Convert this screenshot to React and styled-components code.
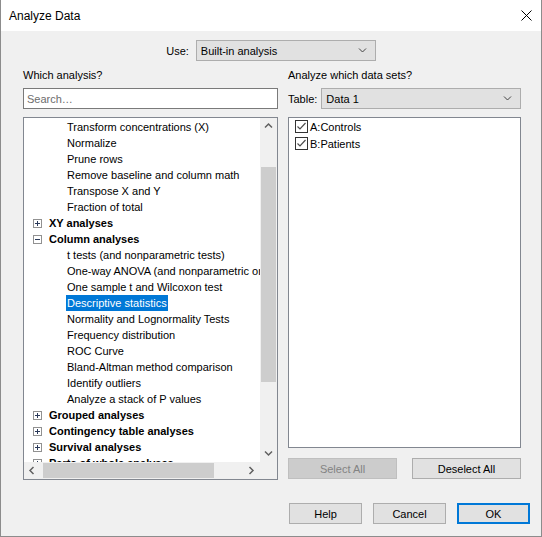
import styled, { createGlobalStyle } from 'styled-components'

const GlobalStyle = createGlobalStyle`
  body {
    margin: 0;
    font-family: "Liberation Sans", Arial, sans-serif;
    background: #ffffff;
  }
  * { box-sizing: border-box; }
`

const Window = styled.div`
  width: 542px;
  height: 537px;
  display: flex;
  flex-direction: column;
  background: #f0f0f0;
  border: 1px solid #8c8c8c;
  border-top: none;
  font-size: 11px;
  color: #000;
`

const TitleBar = styled.div`
  height: 31px;
  flex: none;
  background: #fff;
  display: flex;
  align-items: center;
  justify-content: space-between;
  padding: 0 9px 0 8px;
  font-size: 12px;
`

const Body = styled.div`
  flex: 1;
  display: flex;
  flex-direction: column;
`

const UseRow = styled.div`
  display: flex;
  justify-content: center;
  align-items: center;
  gap: 7px;
  margin-top: 9px;
`

const Select = styled.div`
  width: ${({ $width }) => ($width ? `${$width}px` : 'auto')};
  flex: ${({ $width }) => ($width ? 'none' : '1')};
  height: 21px;
  border: 1px solid #adadad;
  background: #e1e1e1;
  display: flex;
  align-items: center;
  justify-content: space-between;
  padding: 0 8px 0 4px;
`

const Main = styled.div`
  display: grid;
  grid-template-columns: 255px 233px;
  column-gap: 10px;
  padding: 0 20px 0 22px;
  margin-top: 7px;
`

const Column = styled.div`
  display: flex;
  flex-direction: column;
`

const SectionLabel = styled.div`
  height: 14px;
  line-height: 14px;
`

const Search = styled.input`
  margin-top: 6px;
  height: 21px;
  border: 1px solid #7a7a7a;
  background: #fff;
  padding: 0 3px;
  font: inherit;
  outline: none;

  &::placeholder {
    color: #6d6d6d;
  }
`

const TableRow = styled.div`
  margin-top: 6px;
  display: flex;
  align-items: center;
  gap: 4px;
`

const Tree = styled.div`
  margin-top: 8px;
  height: 363px;
  border: 1px solid #828790;
  background: #fff;
  display: grid;
  grid-template-columns: minmax(0, 1fr) 17px;
  grid-template-rows: minmax(0, 1fr) 17px;
  overflow: hidden;
`

const TreeContent = styled.div`
  overflow: hidden;
  padding-top: 1px;
`

const TreeRow = styled.div`
  height: 16px;
  display: flex;
  align-items: center;
  gap: 6px;
  padding-left: ${({ $group }) => ($group ? '9px' : '42px')};
  white-space: nowrap;
`

const RowLabel = styled.span`
  padding: 0 1px;
  line-height: 16px;
  font-weight: ${({ $bold }) => ($bold ? 700 : 400)};
  background: ${({ $selected }) => ($selected ? '#0078d7' : 'transparent')};
  color: ${({ $selected }) => ($selected ? '#fff' : '#000')};
`

const VScroll = styled.div`
  background: #f0f0f0;
  display: flex;
  flex-direction: column;
`

const HScroll = styled.div`
  background: #f0f0f0;
  display: flex;
  align-items: stretch;
`

const Corner = styled.div`
  background: #f0f0f0;
`

const Arrow = styled.div`
  width: 17px;
  height: 17px;
  flex: none;
  display: flex;
  align-items: center;
  justify-content: center;
`

const VThumb = styled.div`
  margin: 32px 1px 0;
  height: 215px;
  background: #cdcdcd;
`

const HThumb = styled.div`
  margin: 1px 0 1px 2px;
  width: 171px;
  background: #cdcdcd;
`

const Spacer = styled.div`
  flex: 1;
`

const DataList = styled.div`
  margin-top: 8px;
  height: 331px;
  border: 1px solid #828790;
  background: #fff;
  padding: 0 0 0 6px;
`

const CheckRow = styled.div`
  height: 17px;
  display: flex;
  align-items: center;
  gap: 2px;
`

const Box = styled.span`
  width: 13px;
  height: 13px;
  border: 1px solid #333;
  background: #fff;
  display: flex;
`

const ButtonPair = styled.div`
  margin-top: 10px;
  display: grid;
  grid-template-columns: 1fr 1fr;
  column-gap: 15px;
`

const Button = styled.button`
  height: 21px;
  width: ${({ $width }) => ($width ? `${$width}px` : 'auto')};
  padding: 0;
  font: inherit;
  color: ${({ disabled }) => (disabled ? '#838383' : '#000')};
  background: ${({ disabled }) => (disabled ? '#cccccc' : '#e1e1e1')};
  border: ${({ disabled, $primary }) =>
    $primary ? '2px solid #0078d7' : disabled ? '1px solid #bfbfbf' : '1px solid #adadad'};
`

const Footer = styled.div`
  margin-top: auto;
  display: flex;
  justify-content: flex-end;
  gap: 11px;
  padding: 0 11px 12px 0;
`

const Chevron = ({ dir = 'down', color = '#606060', width = 1.5 }) => {
  const paths = {
    up: 'M1 5.5 L4.5 2 L8 5.5',
    down: 'M1 2.5 L4.5 6 L8 2.5',
    left: 'M5.5 1 L2 4.5 L5.5 8',
    right: 'M2.5 1 L6 4.5 L2.5 8',
  }
  return (
    <svg width="9" height="9" viewBox="0 0 9 9">
      <path d={paths[dir]} fill="none" stroke={color} strokeWidth={width} />
    </svg>
  )
}

const Expander = ({ open }) => (
  <svg width="9" height="9" viewBox="0 0 9 9" shapeRendering="crispEdges">
    <rect x="0.5" y="0.5" width="8" height="8" fill="#fff" stroke="#919191" />
    <path d="M2 4.5 H7" stroke="#2b3a5a" />
    {!open && <path d="M4.5 2 V7" stroke="#2b3a5a" />}
  </svg>
)

const CheckBox = () => (
  <Box>
    <svg width="11" height="11" viewBox="0 0 11 11">
      <path d="M1.5 5.5 L4 8 L9.5 2" fill="none" stroke="#4d4d4d" strokeWidth="1.2" />
    </svg>
  </Box>
)

const treeRows = [
  { label: 'Transform concentrations (X)' },
  { label: 'Normalize' },
  { label: 'Prune rows' },
  { label: 'Remove baseline and column math' },
  { label: 'Transpose X and Y' },
  { label: 'Fraction of total' },
  { label: 'XY analyses', group: true },
  { label: 'Column analyses', group: true, open: true },
  { label: 't tests (and nonparametric tests)' },
  { label: 'One-way ANOVA (and nonparametric or mixed)' },
  { label: 'One sample t and Wilcoxon test' },
  { label: 'Descriptive statistics', selected: true },
  { label: 'Normality and Lognormality Tests' },
  { label: 'Frequency distribution' },
  { label: 'ROC Curve' },
  { label: 'Bland-Altman method comparison' },
  { label: 'Identify outliers' },
  { label: 'Analyze a stack of P values' },
  { label: 'Grouped analyses', group: true },
  { label: 'Contingency table analyses', group: true },
  { label: 'Survival analyses', group: true },
  { label: 'Parts of whole analyses', group: true },
]

const App = () => (
  <>
    <GlobalStyle />
    <Window>
      <TitleBar>
        <span>Analyze Data</span>
        <svg width="11" height="11" viewBox="0 0 11 11">
          <path d="M0.5 0.5 L10.5 10.5 M10.5 0.5 L0.5 10.5" stroke="#000" strokeWidth="1" />
        </svg>
      </TitleBar>

      <Body>
        <UseRow>
          <span>Use:</span>
          <Select $width={180}>
            <span>Built-in analysis</span>
            <Chevron dir="down" color="#444" width={1} />
          </Select>
        </UseRow>

        <Main>
          <Column>
            <SectionLabel>Which analysis?</SectionLabel>
            <Search placeholder="Search…" />
            <Tree>
              <TreeContent>
                {treeRows.map((row) => (
                  <TreeRow key={row.label} $group={row.group}>
                    {row.group && <Expander open={row.open} />}
                    <RowLabel $bold={row.group} $selected={row.selected}>
                      {row.label}
                    </RowLabel>
                  </TreeRow>
                ))}
              </TreeContent>
              <VScroll>
                <Arrow><Chevron dir="up" /></Arrow>
                <VThumb />
                <Spacer />
                <Arrow><Chevron dir="down" /></Arrow>
              </VScroll>
              <HScroll>
                <Arrow><Chevron dir="left" /></Arrow>
                <HThumb />
                <Spacer />
                <Arrow><Chevron dir="right" /></Arrow>
              </HScroll>
              <Corner />
            </Tree>
          </Column>

          <Column>
            <SectionLabel>Analyze which data sets?</SectionLabel>
            <TableRow>
              <span>Table:</span>
              <Select>
                <span>Data 1</span>
                <Chevron dir="down" color="#444" width={1} />
              </Select>
            </TableRow>
            <DataList>
              <CheckRow><CheckBox /><span>A:Controls</span></CheckRow>
              <CheckRow><CheckBox /><span>B:Patients</span></CheckRow>
            </DataList>
            <ButtonPair>
              <Button disabled>Select All</Button>
              <Button>Deselect All</Button>
            </ButtonPair>
          </Column>
        </Main>

        <Footer>
          <Button $width={73}>Help</Button>
          <Button $width={73}>Cancel</Button>
          <Button $width={73} $primary>OK</Button>
        </Footer>
      </Body>
    </Window>
  </>
)

export default App
